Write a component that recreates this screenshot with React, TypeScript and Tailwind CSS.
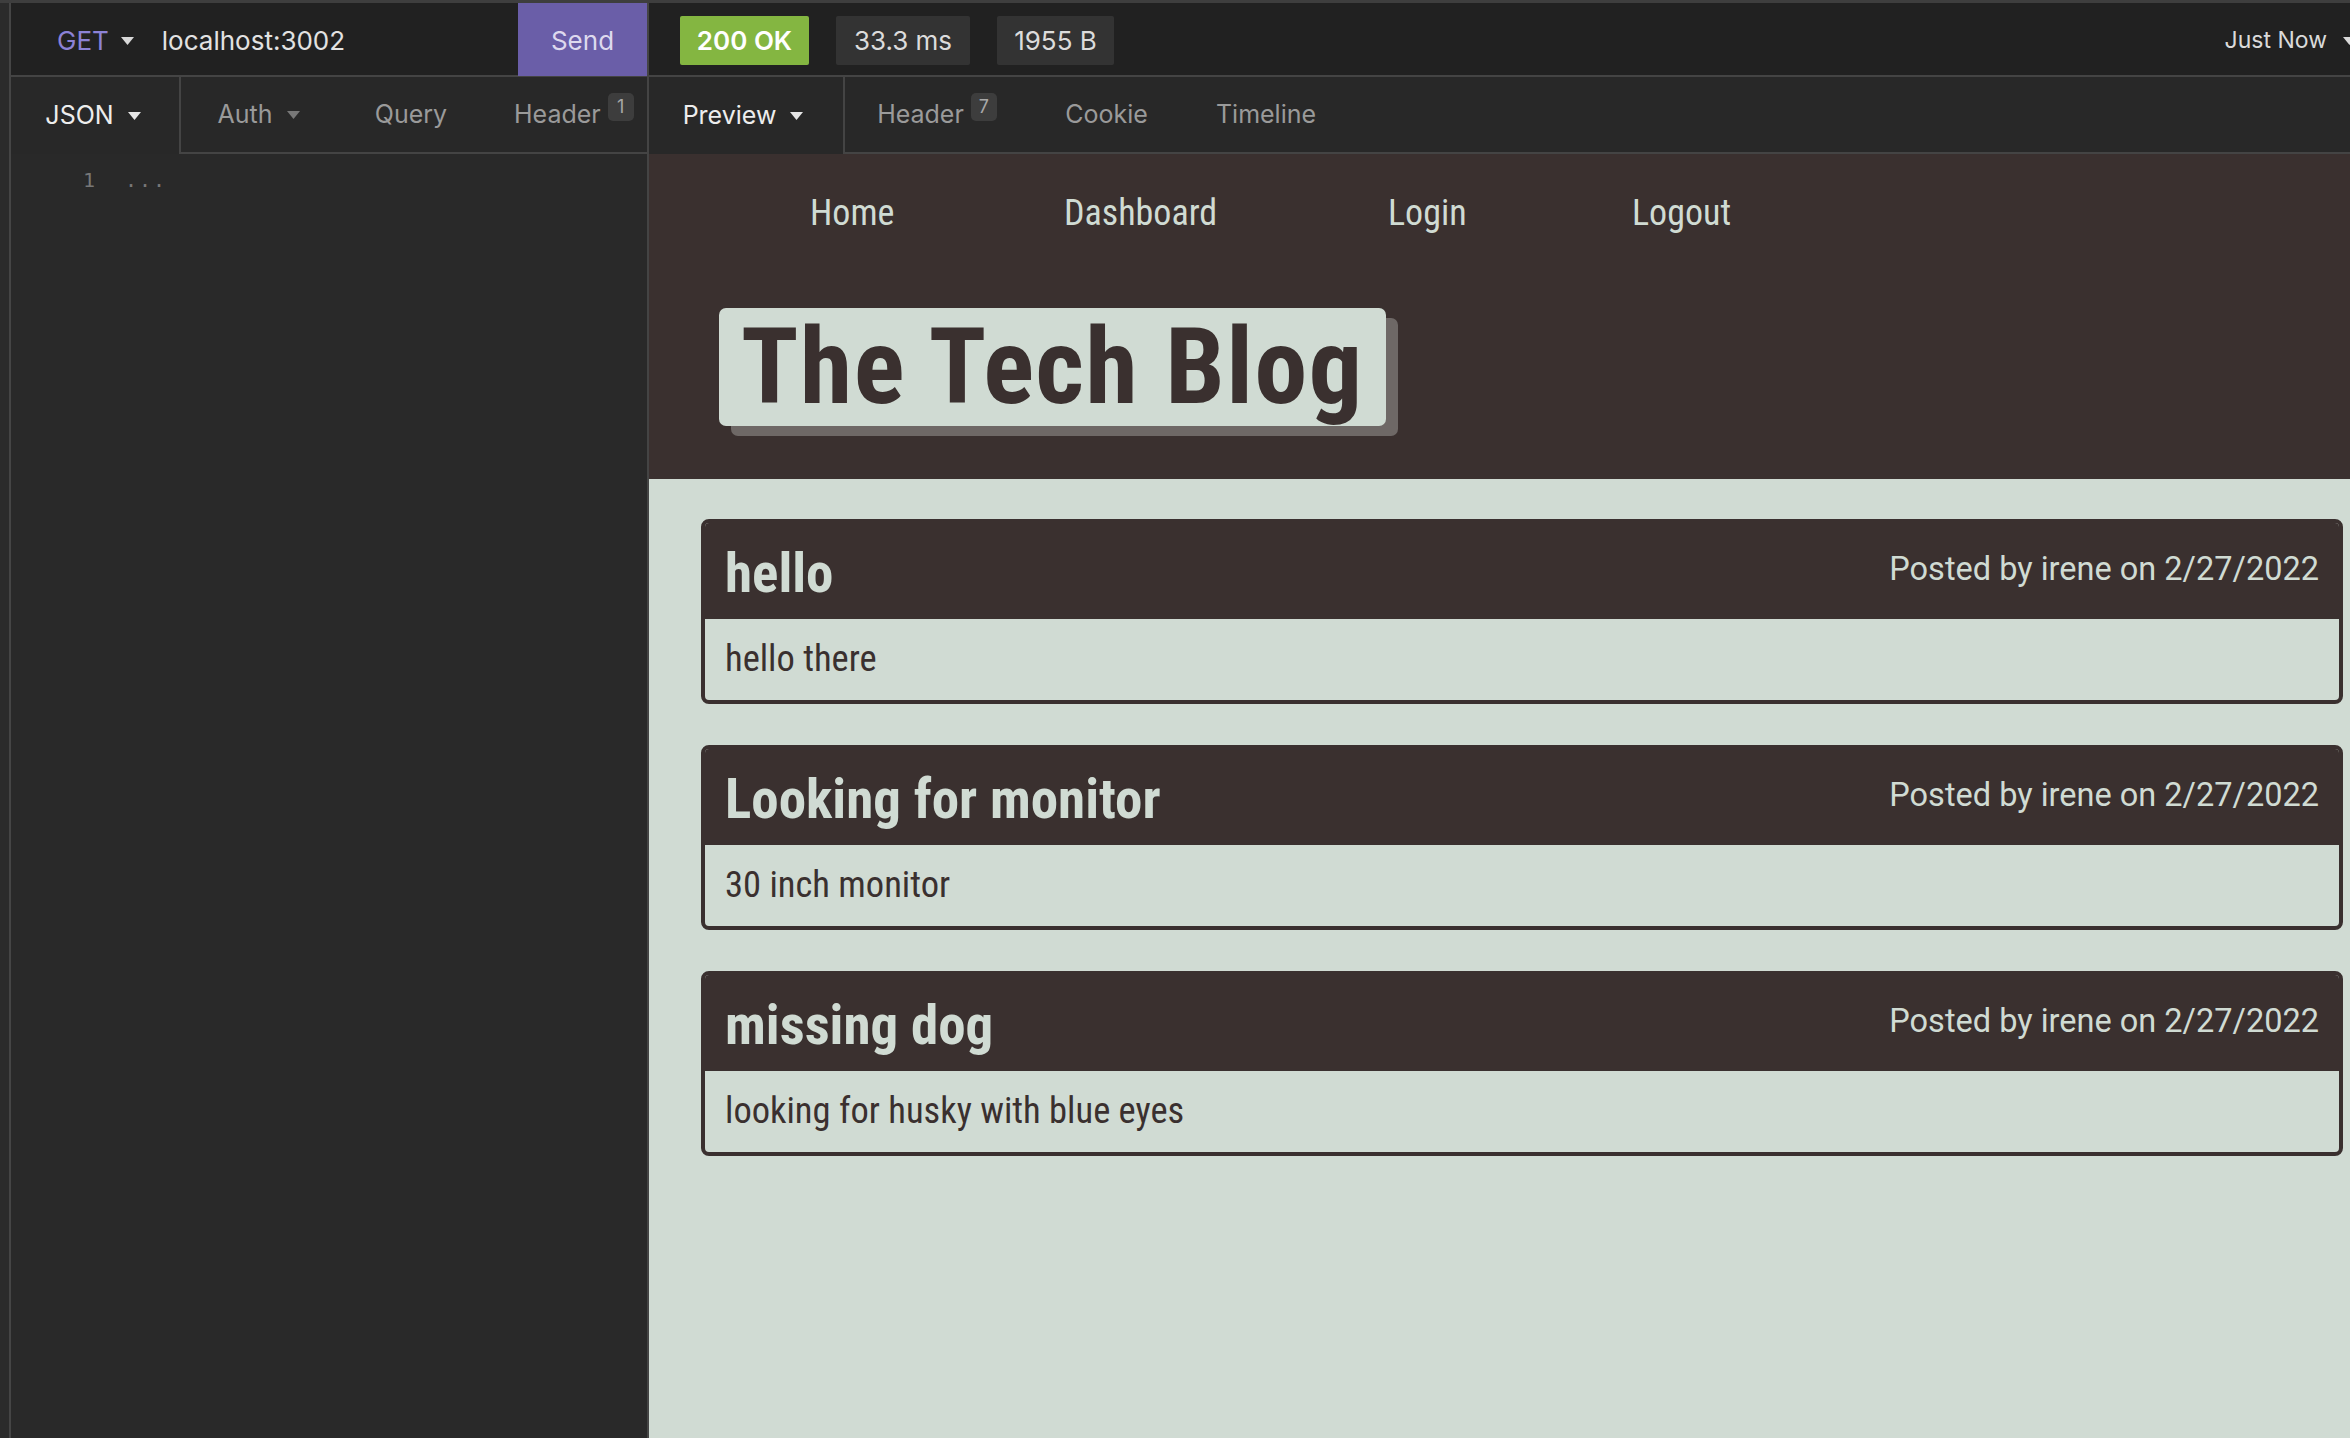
import React from "react";

type Post = {
  id: number;
  title: string;
  body: string;
  author: string;
  date: string;
};

const posts: Post[] = [
  { id: 1, title: "hello", body: "hello there", author: "irene", date: "2/27/2022" },
  { id: 2, title: "Looking for monitor", body: "30 inch monitor", author: "irene", date: "2/27/2022" },
  { id: 3, title: "missing dog", body: "looking for husky with blue eyes", author: "irene", date: "2/27/2022" },
];

function Caret({ className = "" }: { className?: string }) {
  return (
    <svg viewBox="0 0 10 6" className={`w-[13px] h-[8px] ${className}`} fill="currentColor">
      <path d="M0 0h10L5 6z" />
    </svg>
  );
}

function Count({ n }: { n: number }) {
  return (
    <span className="ml-[7px] -mt-[16px] inline-flex h-[28px] min-w-[26px] items-center justify-center rounded-[5px] bg-[#3d3d3d] px-[4px] text-[18px] text-[#a8a8a8]">
      {n}
    </span>
  );
}

function Tab({
  label,
  active,
  caret,
  count,
  className = "",
}: {
  label: string;
  active?: boolean;
  caret?: boolean;
  count?: number;
  className?: string;
}) {
  return (
    <div
      className={`flex h-full shrink-0 items-center justify-center ${
        active ? "border-r-2 border-[#444] text-[#ededed]" : "border-b-2 border-[#444] text-[#9a9a9a]"
      } ${className}`}
    >
      <span>{label}</span>
      {caret && <Caret className={`ml-[14px] ${active ? "text-[#e6e6e6]" : "text-[#777]"}`} />}
      {count !== undefined && <Count n={count} />}
    </div>
  );
}

const ui = "font-['Inter','Liberation_Sans',sans-serif]";
// condensed face used by the previewed blog page
const cond = "font-['Roboto',sans-serif] [font-stretch:75%]";

export default function App() {
  return (
    <div className={`flex h-[1438px] w-[2350px] overflow-hidden border-t-[3px] border-[#3e3e3e] bg-[#2e2e2e] ${ui}`}>
      {/* app sidebar strip */}
      <div className="w-[11px] shrink-0 border-r-2 border-[#454545] bg-[#2b2b2b]" />

      {/* request pane */}
      <div className="flex w-[638px] shrink-0 flex-col border-r-2 border-[#444] bg-[#292929]">
        <div className="flex h-[74px] items-center border-b-2 border-[#444] bg-[#212121] pt-[3px] text-[26px]">
          <div className="flex items-center pl-[46px] text-[#8c82d6]">
            GET
            <Caret className="ml-[12px] text-[#d8d8d8]" />
          </div>
          <div className="ml-[28px] flex-1 text-[#e2e2e2]">localhost:3002</div>
          <div className="-mt-[3px] flex h-[74px] w-[129px] items-center justify-center bg-[#6a5ea8] pt-[3px] text-[#ddd9ee]">
            Send
          </div>
        </div>
        <div className="flex h-[77px] bg-[#282828] text-[25px]">
          <Tab label="JSON" active caret className="w-[170px] pr-[4px]" />
          <Tab label="Auth" caret className="w-[161px] pr-[6px]" />
          <Tab label="Query" className="w-[138px]" />
          <Tab label="Header" count={1} className="flex-1 justify-start pl-[34px]" />
        </div>
        <div className="flex items-start pt-[11px] font-['DejaVu_Sans_Mono',monospace] text-[20px] text-[#777]">
          <span className="w-[84px] text-right">1</span>
          <span className="ml-[30px] tracking-[2px]">...</span>
        </div>
      </div>

      {/* response pane */}
      <div className="flex min-w-0 flex-1 flex-col">
        <div className="flex h-[74px] items-center border-b-2 border-[#444] bg-[#212121] pl-[31px] pt-[3px] text-[26px]">
          <div className="flex h-[49px] w-[129px] items-center justify-center rounded-[2px] bg-[#84b641] font-semibold text-white">
            200 OK
          </div>
          <div className="ml-[27px] flex h-[49px] w-[134px] items-center justify-center rounded-[2px] bg-[#333] text-[#dcdcdc]">
            33.3 ms
          </div>
          <div className="ml-[27px] flex h-[49px] w-[117px] items-center justify-center rounded-[2px] bg-[#333] text-[#dcdcdc]">
            1955 B
          </div>
          <div className="ml-auto flex items-center whitespace-nowrap text-[23px] text-[#dadada]">
            Just Now
            <Caret className="ml-[16px] -mr-[6px]" />
          </div>
        </div>
        <div className="flex h-[77px] bg-[#282828] text-[25px]">
          <Tab label="Preview" active caret className="w-[196px] pr-[6px]" />
          <Tab label="Header" count={7} className="w-[188px] pr-[4px]" />
          <Tab label="Cookie" className="w-[150px] pr-[3px]" />
          <Tab label="Timeline" className="w-[166px]" />
          <div className="flex-1 border-b-2 border-[#444]" />
        </div>

        {/* rendered page */}
        <div className="flex-1 bg-[#d0dbd3]">
          <header className="h-[325px] bg-[#3a302f] pt-[32px]">
            <nav className={`flex pl-[161px] text-[36px] leading-[54px] text-[#d0dbd3] ${cond}`}>
              <a className="w-[254px]">Home</a>
              <a className="w-[324px]">Dashboard</a>
              <a className="w-[244px]">Login</a>
              <a>Logout</a>
            </nav>
            <div className="ml-[70px] mt-[68px] inline-block rounded-[7px] bg-[#d0dbd3] px-[22px] shadow-[12px_10px_0_#6e6866]">
              <h1 className={`text-[106px] font-bold leading-[118px] tracking-[1.5px] text-[#3a302f] ${cond}`}>The Tech Blog</h1>
            </div>
          </header>

          <main className="flex flex-col gap-[41px] pl-[52px] pr-[7px] pt-[40px]">
            {posts.map((post) => (
              <article key={post.id} className="overflow-hidden rounded-[8px] border-4 border-[#3a302f]">
                <div className="flex h-[96px] items-start justify-between bg-[#3a302f] px-[20px]">
                  <h2 className={`mt-[14px] text-[55px] font-bold leading-[72px] text-[#d0dbd3] ${cond}`}>{post.title}</h2>
                  <p className="mt-[22px] font-['Roboto',sans-serif] text-[32.5px] text-[#d0dbd3]">
                    Posted by {post.author} on {post.date}
                  </p>
                </div>
                <div className={`flex h-[81px] items-center px-[20px] text-[36.5px] text-[#3a302f] ${cond}`}>{post.body}</div>
              </article>
            ))}
          </main>
        </div>
      </div>
    </div>
  );
}
